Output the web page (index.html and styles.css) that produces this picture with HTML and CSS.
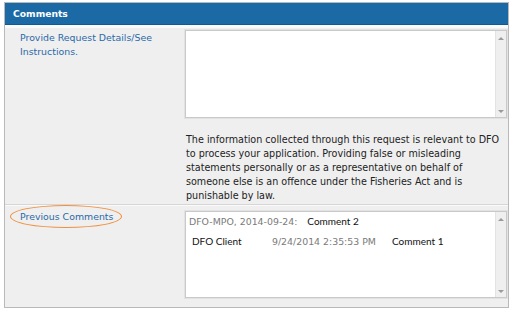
FILE: index.html
```html
<!DOCTYPE html>
<html>
<head>
<meta charset="utf-8">
<link rel="stylesheet" href="styles.css">
</head>
<body>
<div class="panel">
  <div class="panel-head">Comments</div>
  <div class="panel-body">
    <div class="row row-top">
      <div class="label">Provide Request Details/See Instructions.</div>
      <div class="field">
        <div class="box box-input">
          <div class="box-content"></div>
          <div class="scroll"><span class="arrow up"></span><span class="arrow down"></span></div>
        </div>
        <p class="notice">The information collected through this request is relevant to DFO to process your application. Providing false or misleading statements personally or as a representative on behalf of someone else is an offence under the Fisheries Act and is punishable by law.</p>
      </div>
    </div>
    <div class="row row-bottom">
      <div class="label"><span class="link-circled">Previous Comments</span></div>
      <div class="field">
        <div class="box box-history">
          <div class="box-content">
            <div class="entry-line"><span class="meta">DFO-MPO, 2014-09-24:</span><span class="ctext">Comment 2</span></div>
            <div class="entry-row"><span class="c-user">DFO Client</span><span class="c-date meta">9/24/2014 2:35:53 PM</span><span class="ctext">Comment 1</span></div>
          </div>
          <div class="scroll"><span class="arrow up"></span><span class="arrow down"></span></div>
        </div>
      </div>
    </div>
  </div>
</div>
</body>
</html>
```
FILE: styles.css
```css
html, body { margin: 0; padding: 0; background: #ffffff; }
body { padding: 2px 3px 0 4px; font-family: "DejaVu Sans", Verdana, sans-serif; }
.panel {
  width: 503px;
  border: 1px solid #b9b9b9;
  background: #efefef;
}
.panel-head {
  height: 21px;
  line-height: 22px;
  background: #1b6aa6;
  color: #ffffff;
  font-weight: bold;
  font-size: 9.2px;
  padding-left: 8px;
  border-bottom: 1px solid #0f5a93;
}
.panel-body { border-top: 3px solid #fafafa; }
.row { display: flex; }
.row-top { border-bottom: 1px solid #d6d6d6; }
.row-bottom { border-top: 1px solid #fafafa; padding-bottom: 9px; }
.label {
  width: 165px;
  padding: 3px 0 0 15px;
  color: #2a69a8;
  font-size: 9.4px;
  line-height: 14px;
}
.field { flex: 1; padding-top: 2px; padding-right: 1px; }
.box {
  display: flex;
  background: #fff;
  border: 1px solid #c9c9c9;
  box-shadow: 0 0 0 1px #e2e2e2;
}
.box-input { height: 86px; }
.box-history { height: 85px; margin-top: 3px; }
.box-content { flex: 1; }
.scroll {
  width: 10px;
  background: #efefef;
  border-left: 1px solid #e3e3e3;
  display: flex;
  flex-direction: column;
  justify-content: space-between;
  align-items: center;
  padding: 6px 0 4px;
}
.arrow { width: 0; height: 0; border-left: 3px solid transparent; border-right: 3px solid transparent; }
.arrow.up { border-bottom: 3px solid #9a9a9a; }
.arrow.down { border-top: 3px solid #9a9a9a; }
.notice {
  margin: 15px 0 0 1px;
  padding: 0 6px 1px 0;
  color: #222;
  font-size: 9.6px;
  line-height: 14px;
}
.link-circled {
  display: inline-block;
  position: relative;
  padding-top: 1px;
}
.link-circled::after {
  content: "";
  position: absolute;
  left: -10px;
  top: -4px;
  width: 110px;
  height: 21px;
  border: 1.6px solid #f0903f;
  border-radius: 50%;
}
.box-history .box-content { padding: 3px 0 0 3px; font-size: 9.4px; }
.meta { color: #7a7a7a; }
.ctext { font-family: Lato, "Open Sans", sans-serif; color: #111; font-size: 10px; }
.entry-line { display: flex; gap: 10px; align-items: baseline; height: 14px; }
.entry-row { display: flex; align-items: baseline; margin-top: 6px; padding-left: 3px; }
.c-user { font-family: Lato, "Open Sans", sans-serif; color: #111; font-size: 10px; width: 80px; }
.c-date { width: 120px; }
```
